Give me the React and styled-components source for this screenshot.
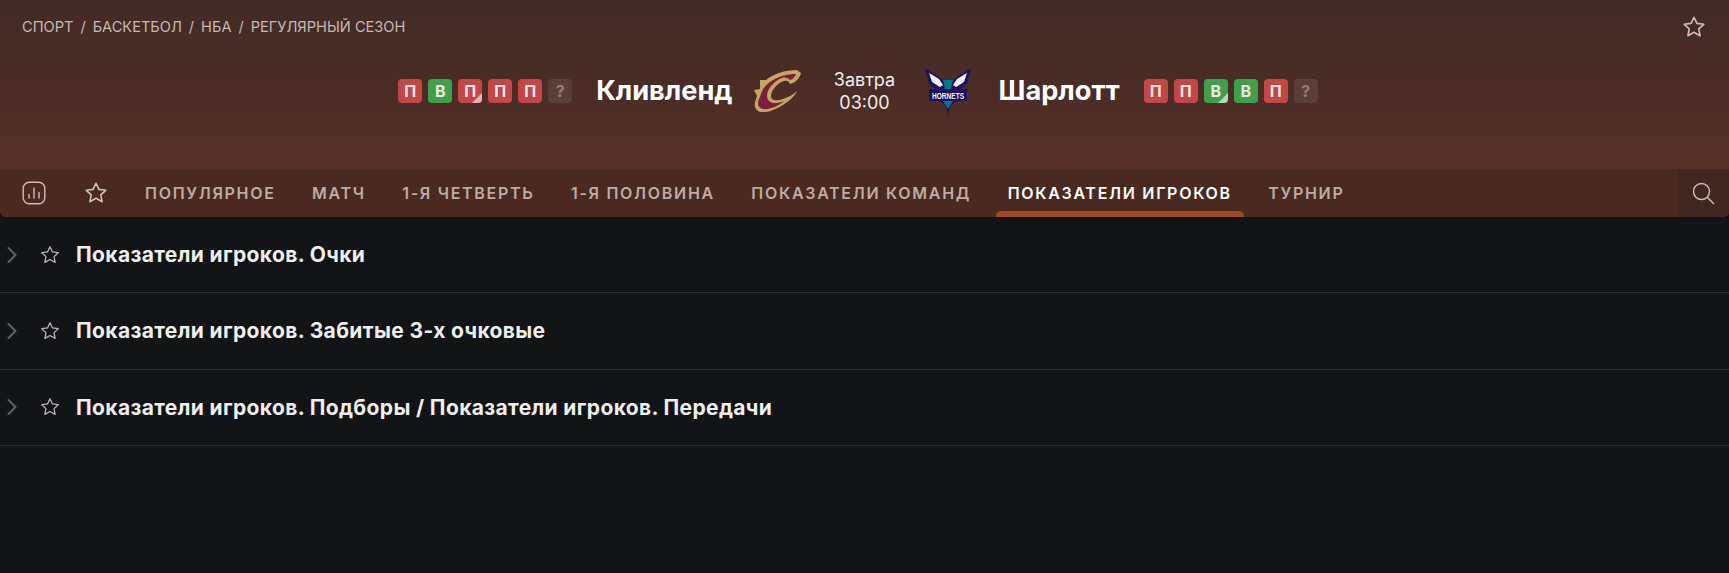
import React from 'react'
import styled, { createGlobalStyle } from 'styled-components'

const GlobalStyle = createGlobalStyle`
  html, body {
    margin: 0;
    padding: 0;
    background: #131416;
  }
  body {
    font-family: Inter, "Noto Sans", sans-serif;
    -webkit-font-smoothing: antialiased;
  }
`

const StarIcon = ({ size = 24, color = '#c9c0bc', width = 1.5 }) => (
  <svg width={size} height={size} viewBox="0 0 24 24" fill="none" stroke={color} strokeWidth={width} strokeLinejoin="round">
    <path d="M12 3l2.700 5.700 6.300.8-4.600 4.300 1.200 6.200-5.600-3.100-5.600 3.100 1.200-6.200-4.600-4.300 6.300-.8z" />
  </svg>
)

const StatsIcon = () => (
  <svg width="24" height="24" viewBox="0 0 24 24" fill="none" stroke="#c9bfba" strokeWidth="1.4" strokeLinecap="round">
    <rect x="1.200" y="1.200" width="21.600" height="21.600" rx="6" />
    <path d="M7 13.500v3.500M12 7v10M17 11.500v5.500" />
  </svg>
)

const SearchIcon = () => (
  <svg width="26" height="26" viewBox="0 0 26 26" fill="none" stroke="#c9bfba" strokeWidth="1.500" strokeLinecap="round">
    <circle cx="11.500" cy="11.500" r="8" />
    <path d="M17.500 17.500l6 6" />
  </svg>
)

const Chevron = () => (
  <svg width="12" height="18" viewBox="0 0 12 18" fill="none" stroke="#606267" strokeWidth="2" strokeLinecap="round" strokeLinejoin="round">
    <path d="M2.500 2l7 7-7 7" />
  </svg>
)

const CavsLogo = () => (
  <CavsSvg width="48" height="42" viewBox="0 0 48 42">
    <path
      d="M48 3C47 8 42 13 37 14C36 11 34 10 31 11C24 13 18 21 18 26C18 31 24 31 30 29C36 27 41 24 44 21C43 24 38 30 30 35C22 40 14 43 8 42C3 41 1 37 2 32L4 26L1 20L7 19L7 10L13 10C20 4 32 0 44 0Z"
      fill="#c2a661"
    />
    <path
      d="M43 4C42 7 39 10 37 10C35 8 32 7 29 8C21 11 14 19 14 26C14 33 22 35 31 31C27 35 17 40 10 39C5 38 4 34 6 29L8 24C10 15 24 4 43 4Z"
      fill="#7a1f3d"
    />
  </CavsSvg>
)

const HornetsLogo = () => (
  <HornetsSvg width="46" height="45" viewBox="0 0 46 45">
    <path d="M0 0L13 7L19 12H27L33 7L46 0L42 15L35 20H42V32H32L26 36L23 45L20 36L14 32H4V20H11L4 15Z" fill="#1d1160" />
    <path d="M4 4L14 10L18 16L15 18L7 13Z" fill="#f2f2f6" />
    <path d="M42 4L32 10L28 16L31 18L39 13Z" fill="#f2f2f6" />
    <path d="M18 11H28L26 20H20Z" fill="#00788c" />
    <path d="M18 32H28L23 40Z" fill="#00788c" />
    <LogoText x="23" y="29.500" textAnchor="middle" textLength="32" lengthAdjust="spacingAndGlyphs">HORNETS</LogoText>
  </HornetsSvg>
)

const FormChip = ({ value }) => {
  const base = value.replace('*', '')
  return (
    <Chip $kind={base} $partial={value.endsWith('*')}>
      {base}
    </Chip>
  )
}

const Form = ({ items }) => (
  <FormList>
    {items.map((it, i) => (
      <FormChip key={i} value={it} />
    ))}
  </FormList>
)

const tabs = [
  'Популярное',
  'Матч',
  '1-я четверть',
  '1-я половина',
  'Показатели команд',
  'Показатели игроков',
  'Турнир',
]

const groups = [
  'Показатели игроков. Очки',
  'Показатели игроков. Забитые 3-х очковые',
  'Показатели игроков. Подборы / Показатели игроков. Передачи',
]

export default function App() {
  return (
    <Page>
      <GlobalStyle />
      <Header>
        <TopRow>
          <Breadcrumbs>
            <span>Спорт</span>
            <span>/</span>
            <span>Баскетбол</span>
            <span>/</span>
            <span>НБА</span>
            <span>/</span>
            <span>Регулярный сезон</span>
          </Breadcrumbs>
          <StarIcon size={26} />
        </TopRow>
        <Match>
          <Side $align="end">
            <Form items={['П', 'В', 'П*', 'П', 'П', '?']} />
            <TeamName>Кливленд</TeamName>
            <CavsLogo />
          </Side>
          <Time>
            <div>Завтра</div>
            <div>03:00</div>
          </Time>
          <Side $align="start">
            <HornetsLogo />
            <TeamName>Шарлотт</TeamName>
            <Form items={['П', 'П', 'В*', 'В', 'П', '?']} />
          </Side>
        </Match>
      </Header>
      <Nav>
        <NavIcon $first><StatsIcon /></NavIcon>
        <NavIcon><StarIcon size={28} /></NavIcon>
        <Tabs>
          {tabs.map((t) => (
            <Tab key={t} $active={t === 'Показатели игроков'}>{t}</Tab>
          ))}
        </Tabs>
        <SearchBox><SearchIcon /></SearchBox>
      </Nav>
      <main>
        {groups.map((g) => (
          <Row key={g}>
            <Chevron />
            <RowStar><StarIcon size={22} color="#b5b6b9" width={1.4} /></RowStar>
            <RowTitle>{g}</RowTitle>
          </Row>
        ))}
      </main>
    </Page>
  )
}

const Page = styled.div`
  width: 1729px;
  height: 573px;
  overflow: hidden;
  background: #131416;
`

const Header = styled.header`
  height: 169px;
  box-sizing: border-box;
  padding: 0 22px;
  background: linear-gradient(180deg, #432b27 0%, #4a2c26 50%, #562f26 100%);
`

const TopRow = styled.div`
  display: flex;
  justify-content: space-between;
  align-items: center;
  height: 54px;
`

const Breadcrumbs = styled.div`
  display: flex;
  gap: 7px;
  font-size: 14.600px;
  line-height: 18px;
  color: #c4bab6;
  text-transform: uppercase;
`

const Match = styled.div`
  display: grid;
  grid-template-columns: 1fr 66px 1fr;
  align-items: center;
  column-gap: 29px;
  height: 74px;
  margin: 0 -22px;
`

const Side = styled.div`
  display: flex;
  align-items: center;
  justify-content: ${(p) => (p.$align === 'end' ? 'flex-end' : 'flex-start')};
  gap: 24px;
`

const CavsSvg = styled.svg`
  margin: 0 2px 0 -4px;
`

const HornetsSvg = styled.svg`
  margin: 0 4px 0 -2px;
`

const TeamName = styled.div`
  font-size: 27.200px;
  line-height: 32px;
  font-weight: 700;
  color: #fff;
`

const Time = styled.div`
  font-size: 18px;
  line-height: 23px;
  color: #f2eeec;
  text-align: center;
  white-space: nowrap;
`

const FormList = styled.div`
  display: flex;
  gap: 6px;
`

const chipColors = {
  'П': '#c24745',
  'В': '#3ea14a',
  '?': '#5a3f39',
}

const Chip = styled.div`
  position: relative;
  width: 24px;
  height: 24px;
  overflow: hidden;
  border-radius: 4px;
  background: ${(p) => chipColors[p.$kind]};
  color: ${(p) => (p.$kind === '?' ? '#8f7f7a' : '#eee6e4')};
  font-size: 16px;
  font-weight: 700;
  line-height: 24px;
  text-align: center;

  &::after {
    content: '';
    display: ${(p) => (p.$partial ? 'block' : 'none')};
    position: absolute;
    right: 0;
    bottom: 0;
    border-style: solid;
    border-width: 0 0 10px 10px;
    border-color: transparent transparent rgba(255, 255, 255, 0.6) transparent;
  }
`

const Nav = styled.nav`
  display: flex;
  align-items: stretch;
  height: 48px;
  overflow: hidden;
  border-radius: 0 0 5px 5px;
  background: #4a2a20;
`

const NavIcon = styled.div`
  display: flex;
  align-items: center;
  justify-content: center;
  width: 26px;
  margin-left: ${(p) => (p.$first ? '21px' : '36px')};
`

const Tabs = styled.div`
  display: flex;
  gap: 36.500px;
  flex: 1;
  margin-left: 36px;
`

const Tab = styled.div`
  position: relative;
  display: flex;
  align-items: center;
  font-size: 16px;
  font-weight: 600;
  letter-spacing: 1.700px;
  text-transform: uppercase;
  white-space: nowrap;
  color: ${(p) => (p.$active ? '#fff' : '#bcaca6')};

  &::after {
    content: '';
    display: ${(p) => (p.$active ? 'block' : 'none')};
    position: absolute;
    left: -12px;
    right: -12px;
    bottom: 0;
    height: 6px;
    border-radius: 5px 5px 0 0;
    background: #9d4a2b;
  }
`

const SearchBox = styled.div`
  display: flex;
  align-items: center;
  justify-content: center;
  width: 52px;
  background: #41271f;
`

const Row = styled.div`
  display: flex;
  align-items: center;
  height: 76.300px;
  box-sizing: border-box;
  padding-left: 6px;
  border-bottom: 1px solid #2c2d30;
`

const RowStar = styled.span`
  display: flex;
  margin-left: 21px;
`

const RowTitle = styled.span`
  margin-left: 15px;
  font-size: 21px;
  font-weight: 700;
  letter-spacing: 0.360px;
  color: #eeeeef;
`

const LogoText = styled.text`
  font-family: "Liberation Sans", sans-serif;
  font-size: 9px;
  font-weight: 700;
  fill: #f2f2f6;
`
